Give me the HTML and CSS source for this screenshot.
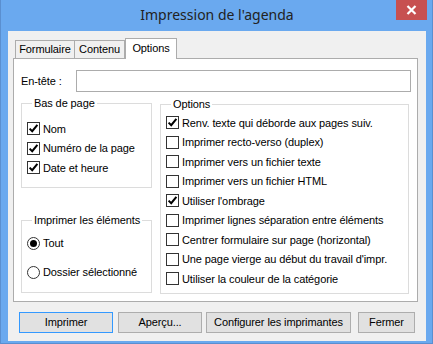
FILE: index.html
```html
<!DOCTYPE html>
<html lang="fr">
<head>
<meta charset="utf-8">
<title>Impression de l'agenda</title>
<link rel="stylesheet" href="styles.css">
</head>
<body>
<div class="window">
  <div class="titlebar">
    <div class="title">Impression de l'agenda</div>
    <div class="close"><svg width="11" height="10" viewBox="0 0 11 10"><path d="M1.5 1 L9.5 9 M9.5 1 L1.5 9" stroke="#fff" stroke-width="2.2" fill="none"/></svg></div>
  </div>
  <div class="client">
    <div class="tabs">
      <div class="tab t1">Formulaire</div>
      <div class="tab t2">Contenu</div>
      <div class="tab active">Options</div>
    </div>
    <div class="panel">
      <div class="header-row">
        <span class="label">En-tête :</span>
        <div class="input"></div>
      </div>
      <div class="groups">
        <div class="leftcol">
          <fieldset class="group g-footer">
            <legend>Bas de page</legend>
            <div class="row"><span class="cb on"><svg width="11" height="11" viewBox="0 0 11 11"><path d="M1.6 5.6 L4.2 8.2 L9.4 1.8" stroke="#000" stroke-width="2" fill="none"/></svg></span>Nom</div>
            <div class="row"><span class="cb on"><svg width="11" height="11" viewBox="0 0 11 11"><path d="M1.6 5.6 L4.2 8.2 L9.4 1.8" stroke="#000" stroke-width="2" fill="none"/></svg></span>Numéro de la page</div>
            <div class="row"><span class="cb on"><svg width="11" height="11" viewBox="0 0 11 11"><path d="M1.6 5.6 L4.2 8.2 L9.4 1.8" stroke="#000" stroke-width="2" fill="none"/></svg></span>Date et heure</div>
          </fieldset>
          <fieldset class="group g-items">
            <legend>Imprimer les éléments</legend>
            <div class="row radio-row"><span class="rb on"></span>Tout</div>
            <div class="row radio-row second"><span class="rb"></span>Dossier sélectionné</div>
          </fieldset>
        </div>
        <fieldset class="group g-options">
          <legend>Options</legend>
          <div class="row"><span class="cb on"><svg width="11" height="11" viewBox="0 0 11 11"><path d="M1.6 5.6 L4.2 8.2 L9.4 1.8" stroke="#000" stroke-width="2" fill="none"/></svg></span>Renv. texte qui déborde aux pages suiv.</div>
          <div class="row"><span class="cb"></span>Imprimer recto-verso (duplex)</div>
          <div class="row"><span class="cb"></span>Imprimer vers un fichier texte</div>
          <div class="row"><span class="cb"></span>Imprimer vers un fichier HTML</div>
          <div class="row"><span class="cb on"><svg width="11" height="11" viewBox="0 0 11 11"><path d="M1.6 5.6 L4.2 8.2 L9.4 1.8" stroke="#000" stroke-width="2" fill="none"/></svg></span>Utiliser l'ombrage</div>
          <div class="row"><span class="cb"></span>Imprimer lignes séparation entre éléments</div>
          <div class="row"><span class="cb"></span>Centrer formulaire sur page (horizontal)</div>
          <div class="row"><span class="cb"></span>Une page vierge au début du travail d'impr.</div>
          <div class="row"><span class="cb"></span>Utiliser la couleur de la catégorie</div>
        </fieldset>
      </div>
    </div>
    <div class="buttons">
      <div class="btn b-print default">Imprimer</div>
      <div class="btn b-preview">Aperçu...</div>
      <div class="btn b-config">Configurer les imprimantes</div>
      <div class="btn b-close">Fermer</div>
    </div>
  </div>
</div>
</body>
</html>
```

FILE: styles.css
```css
html, body {
  margin: 0;
  padding: 0;
}
body {
  font-family: "Liberation Sans", Arial, sans-serif;
  font-size: 11px;
  letter-spacing: -0.1px;
  color: #000;
}
.window {
  width: 433px;
  height: 344px;
  box-sizing: border-box;
  background: #6aa9ef;
  border-left: 1px solid #5a8fd0;
  border-right: 1px solid #5a8fd0;
  border-bottom: 1px solid #5a8fd0;
  padding: 0 6px 2px 7px;
  display: flex;
  flex-direction: column;
}
.titlebar {
  height: 31px;
  display: grid;
  grid-template-columns: 1fr auto 1fr;
  align-items: start;
}
.title {
  grid-column: 2;
  font-family: "Noto Sans", "Open Sans", sans-serif;
  font-size: 14px;
  letter-spacing: 0;
  color: #222;
  line-height: 20px;
  padding-top: 5px;
}
.close {
  grid-column: 3;
  justify-self: end;
  width: 31px;
  height: 20px;
  margin-right: -1px;
  background: #c75050;
  display: flex;
  align-items: center;
  justify-content: center;
}
.close svg { display: block; }
.client {
  flex: 1;
  background: #f0f0f0;
  padding: 7px 8px 0 5px;
  display: flex;
  flex-direction: column;
}
.tabs {
  display: flex;
  align-items: flex-end;
  height: 20px;
  padding-left: 2px;
  position: relative;
  z-index: 1;
}
.tab {
  box-sizing: border-box;
  height: 18px;
  border: 1px solid #acacac;
  border-bottom: none;
  background: #f0f0f0;
  text-align: center;
  line-height: 17px;
}
.t1 { width: 60px; }
.t2 { width: 51px; margin-left: -1px; }
.tab.active {
  width: 52px;
  height: 21px;
  margin-left: 0;
  margin-bottom: -1px;
  background: #fff;
  line-height: 18px;
}
.panel {
  box-sizing: border-box;
  height: 244px;
  background: #fff;
  border: 1px solid #acacac;
  padding: 11px 6px 0 6px;
}
.header-row {
  display: flex;
  align-items: center;
  height: 22px;
}
.label {
  width: 55px;
  padding-left: 1px;
}
.input {
  flex: 1;
  height: 22px;
  box-sizing: border-box;
  border: 1px solid #acacac;
  background: #fff;
}
.groups {
  display: grid;
  grid-template-columns: 131px 249px;
  column-gap: 8px;
  margin-top: 5px;
  padding-left: 1px;
}
.leftcol {
  display: flex;
  flex-direction: column;
}
.group {
  margin: 0;
  box-sizing: border-box;
  border: 1px solid #dcdcdc;
  padding: 0 4px 0 5px;
  min-width: 0;
}
.group legend {
  padding: 0 2px;
  margin-left: 5px;
  line-height: 13px;
}
.g-footer {
  height: 91px;
  padding-top: 9px;
}
.g-items {
  height: 79px;
  margin-top: 26px;
  padding-top: 6px;
}
.g-options {
  height: 196px;
  margin-top: 1px;
  padding-top: 2px;
}
.row {
  display: flex;
  align-items: center;
  height: 19.5px;
  white-space: nowrap;
}
.radio-row { height: 20px; }
.radio-row.second { margin-top: 9px; }
.cb {
  box-sizing: border-box;
  width: 13px;
  height: 13px;
  border: 1px solid #333;
  background: #fff;
  margin-right: 3px;
  flex: none;
  display: flex;
  align-items: center;
  justify-content: center;
}
.cb svg { display: block; }
.rb {
  box-sizing: border-box;
  width: 13px;
  height: 13px;
  border: 1px solid #333;
  border-radius: 50%;
  background: #fff;
  margin-right: 3px;
  flex: none;
  display: flex;
  align-items: center;
  justify-content: center;
}
.rb.on::after {
  content: "";
  width: 7px;
  height: 7px;
  border-radius: 50%;
  background: #000;
}
.buttons {
  display: flex;
  margin-top: 10px;
  padding-left: 6px;
}
.btn {
  box-sizing: border-box;
  height: 21px;
  border: 1px solid #adadad;
  background: #e1e1e1;
  text-align: center;
  line-height: 19px;
}
.btn.default { border-color: #3399ff; }
.b-print { width: 94px; }
.b-preview { width: 84px; margin-left: 5px; }
.b-config { width: 145px; margin-left: 4px; }
.b-close { width: 57px; margin-left: 7px; }
```
